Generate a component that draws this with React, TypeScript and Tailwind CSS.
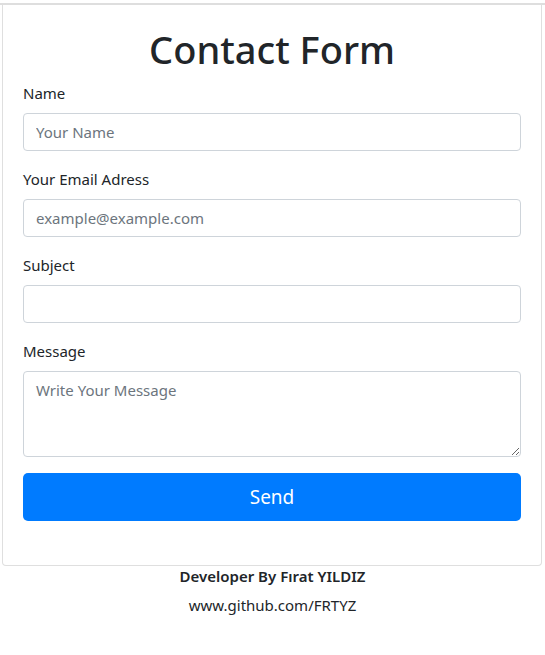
const font = { fontFamily: '"Noto Sans", "Open Sans", sans-serif' };

function Field({ label, placeholder }: { label: string; placeholder?: string }) {
  return (
    <div className="mb-4">
      <label className="block mb-2 text-[15px] leading-6 text-[#212529]">{label}</label>
      <input
        type="text"
        placeholder={placeholder}
        className="block w-full h-[38px] px-3 rounded border border-[#ced4da] bg-white text-[15px] text-[#495057] placeholder:text-[#6c757d] outline-none"
      />
    </div>
  );
}

export default function App() {
  return (
    <div className="min-h-[655px] bg-white pt-[3px]" style={font}>
      <div className="h-[2px] w-full bg-[#dedede]" />
      <div className="mx-[2px] w-[540px] rounded-b border-x border-b border-[#dfdfdf] px-5 pt-5 pb-[44px]">
        <h1 className="mb-2 text-center text-[38px] font-medium leading-[48px] text-[#212529]">Contact Form</h1>
        <form>
          <Field label="Name" placeholder="Your Name" />
          <Field label="Your Email Adress" placeholder="example@example.com" />
          <Field label="Subject" />
          <div className="mb-4">
            <label className="block mb-2 text-[15px] leading-6 text-[#212529]">Message</label>
            <textarea
              rows={3}
              placeholder="Write Your Message"
              className="block w-full h-[86px] px-3 py-1.5 rounded border border-[#ced4da] bg-white text-[15px] leading-6 text-[#495057] placeholder:text-[#6c757d] outline-none"
            />
          </div>
          <button
            type="button"
            className="block w-full h-12 rounded-[5px] bg-[#007bff] text-[19px] text-white"
          >
            Send
          </button>
        </form>
      </div>
      <p className="text-center text-[15px] font-semibold leading-[20px] text-[#212529]">Developer By Fırat YILDIZ</p>
      <p className="mt-[8px] text-center text-[15px] leading-[22px] text-[#212529]">www.github.com/FRTYZ</p>
    </div>
  );
}
